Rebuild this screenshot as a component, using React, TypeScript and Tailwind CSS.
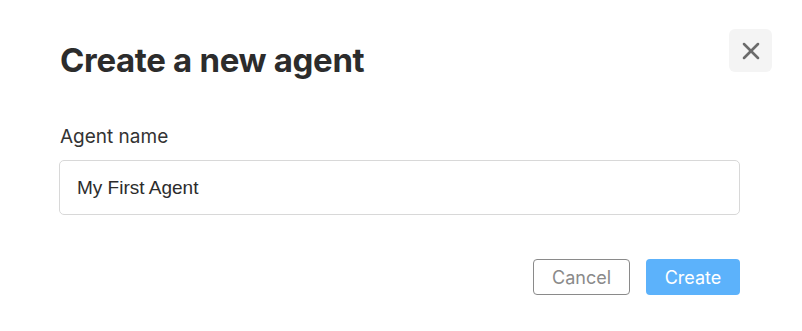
import { X } from "lucide-react";

export default function App() {
  return (
    <div className="h-[331px] w-[802px] bg-white font-['Inter',sans-serif] text-[#2c2c2c]">
      <div className="flex items-start justify-between pl-[60px] pr-[30px] pt-[29px]">
        <h1 className="mt-[11px] text-[33px] font-bold leading-[40px] tracking-[-0.01em]">
          Create a new agent
        </h1>
        <button className="flex h-[43px] w-[43px] items-center justify-center rounded-md bg-[#f4f4f4] text-[#6b6b6b]">
          <X className="h-[28px] w-[28px]" strokeWidth={2.2} />
        </button>
      </div>

      <div className="pl-[59px] pr-[62px] pt-[44px]">
        <label className="block pl-px text-[19px] leading-[26px] text-[#333]">Agent name</label>
        <input
          defaultValue="My First Agent"
          className="mt-[10px] h-[55px] w-full rounded-[5px] border border-[#d8d8d8] px-[17px] font-['Liberation_Sans',sans-serif] text-[19px] text-[#2c2c2c] outline-none"
        />
      </div>

      <div className="flex justify-end gap-[16px] px-[62px] pt-[44px]">
        <button className="h-[36px] w-[97px] rounded-[4px] border border-[#8a8a8a] text-[18px] text-[#8a8a8a]">
          Cancel
        </button>
        <button className="h-[36px] w-[94px] rounded-[4px] bg-[#5cb2fb] text-[18px] text-white">
          Create
        </button>
      </div>
    </div>
  );
}
